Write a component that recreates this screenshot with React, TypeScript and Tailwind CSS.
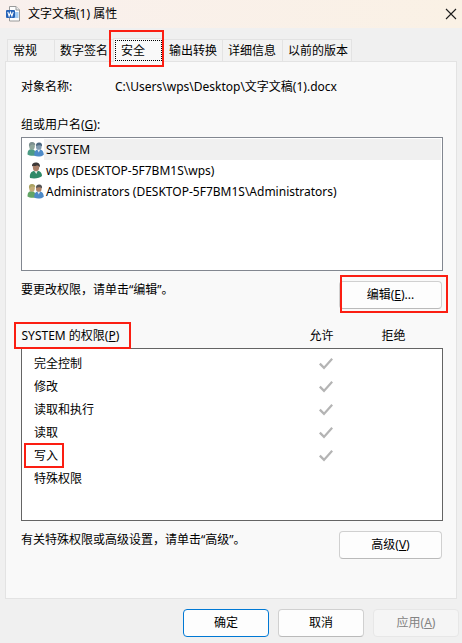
import type { ReactNode } from 'react';
import clsx from 'clsx';

const TABS = [
  { label: '常规', width: 'w-[47px]' },
  { label: '数字签名', width: 'w-[59px]' },
  { label: '安全', width: 'w-[50px]', active: true },
  { label: '输出转换', width: 'w-[59px]' },
  { label: '详细信息', width: 'w-[60px]' },
  { label: '以前的版本', width: 'w-[70px]' },
];

const PRINCIPALS = [
  { name: 'SYSTEM', kind: 'system', selected: true },
  { name: 'wps (DESKTOP-5F7BM1S\\wps)', kind: 'user' },
  { name: 'Administrators (DESKTOP-5F7BM1S\\Administrators)', kind: 'group' },
];

const PERMISSIONS = [
  { label: '完全控制', allow: true },
  { label: '修改', allow: true },
  { label: '读取和执行', allow: true },
  { label: '读取', allow: true },
  { label: '写入', allow: true, marked: true },
  { label: '特殊权限', allow: false },
];

function WordIcon() {
  return (
    <svg width="16" height="18" viewBox="0 0 16 18" aria-hidden="true">
      <path d="M3.5 1.5h6.5l3.5 3.5v11h-10z" fill="#fdfdfd" stroke="#9a9a9a" />
      <path d="M10 1.5V5h3.5" fill="#eee" stroke="#9a9a9a" />
      <path d="M9 8h3.5M9 10h3.5M9 12h3.5" stroke="#4c9be8" strokeWidth="1.2" />
      <rect x="0" y="5" width="9" height="8" rx="1" fill="#2563b8" />
      <path d="M1.8 6.8l1.3 4.3 1.4-3.8 1.4 3.8 1.3-4.3" fill="none" stroke="#fff" strokeWidth="1.1" />
    </svg>
  );
}

function PrincipalIcon({ kind }: { kind: string }) {
  if (kind === 'user') {
    return (
      <svg width="17" height="17" viewBox="0 0 17 17" aria-hidden="true">
        <path d="M3 16c-.6-4 1-6.5 4-7.3l2 1.3 2-1.3c3 .5 4 3 4 5.3-2 2.4-8 3-12 2z" fill="#2f8a68" />
        <path d="M7 8.5h3.8L9.3 12z" fill="#e6eee9" />
        <ellipse cx="9" cy="5.5" rx="3.1" ry="3.8" fill="#a97f68" />
        <path d="M5 4.5C4.6 1.8 6.5.5 9 .6c3 0 4.6 2.2 3.8 4.8-.6-1.4-1.6-2-3-2-1.3.5-2.8.8-3.4.4z" fill="#3c3836" />
      </svg>
    );
  }

  const system = kind === 'system';
  return (
    <svg width="17" height="17" viewBox="0 0 17 17" aria-hidden="true">
      <path d="M.5 13.5c0-4 1.3-5.4 4-5.6 3 .3 4.3 2.3 4 6.6-2.4.6-6.5.4-8-1z" fill={system ? '#4b9b84' : '#62a566'} />
      <path d="M7.4 14.8c-.4-4 .8-6 4-6.5 3.3 0 5.2 1.6 5.4 5.4-1.8 2-6.8 2.4-9.4 1.1z" fill="#4d8ac8" />
      <ellipse cx="5" cy="5.2" rx="2.8" ry="3.6" fill={system ? '#8fa69b' : '#c4ad79'} />
      <path d="M2 5.4C1.5 2.3 2.8 1 5 1s3.6 1.2 3.2 3.6C6.8 3.4 5.4 3.2 4.4 3.8z" fill={system ? '#7d9090' : '#aaa363'} />
      <ellipse cx="11.8" cy="5.8" rx="2.8" ry="3.3" fill={system ? '#829bb0' : '#ae8268'} />
      <path d="M9 5c-.2-2.6 1.4-3.6 3.2-3.5 2.4 0 3.3 1.8 2.7 4-1-1.3-3.4-1.8-5.9-.5z" fill={system ? '#4d6880' : '#545354'} />
      <path d="M10.3 8.8h2.8l-1.3 2.6z" fill="#e1eaf1" />
    </svg>
  );
}

// Red callout frame laid over the content it points at.
function Callout({ className }: { className: string }) {
  return <span aria-hidden="true" className={clsx('pointer-events-none absolute z-10 border-2 border-[#fb1e12]', className)} />;
}

function DialogButton({
  children,
  variant = 'normal',
  className,
}: {
  children: ReactNode;
  variant?: 'normal' | 'primary' | 'disabled';
  className: string;
}) {
  return (
    <button
      type="button"
      disabled={variant === 'disabled'}
      className={clsx(
        'flex h-7 shrink-0 items-center justify-center rounded-[4px] border',
        variant === 'primary' && 'border-[#0078d4] bg-[#fdfdfd]',
        variant === 'normal' && 'border-[#d0d0d0] border-b-[#bababa] bg-[#fdfdfd]',
        variant === 'disabled' && 'border-[#e7e7e7] bg-[#f5f5f5] text-[#838383]',
        className,
      )}
    >
      <span>{children}</span>
    </button>
  );
}

function PermissionCheck({ label, checked }: { label: string; checked: boolean }) {
  return (
    <span className="relative ml-2 inline-flex h-[14px] w-[14px] align-middle">
      <input type="checkbox" aria-label={label} checked={checked} disabled readOnly className="h-full w-full appearance-none" />
      {checked && (
        <svg width="14" height="14" viewBox="0 0 14 14" className="absolute inset-0" aria-hidden="true">
          <path d="M.8 6.6l4.2 4.3 8.2-9.2" fill="none" stroke="#b4b4b4" strokeWidth="2.3" />
        </svg>
      )}
    </span>
  );
}

function PermissionTable() {
  return (
    <table className="mt-[13px] w-full table-fixed border-collapse text-left">
      <colgroup>
        <col />
        <col className="w-[72px]" />
        <col className="w-[84px]" />
      </colgroup>
      <thead>
        <tr className="h-6">
          <th className="p-0 font-normal">
            <span className="relative">
              SYSTEM 的权限(<u>P</u>)
              <Callout className="-left-2 -right-3 -inset-y-[5px]" />
            </span>
          </th>
          <th className="p-0 pl-[23px] font-normal">允许</th>
          <th className="p-0 pl-[23px] font-normal">拒绝</th>
        </tr>
      </thead>
      <tbody className="border border-[#646464] bg-white">
        <tr className="h-1">
          <td colSpan={3} className="p-0" />
        </tr>
        {PERMISSIONS.map((p) => (
          <tr key={p.label} className="h-[23px]">
            <td className="p-0 pl-3">
              <span className="relative">
                {p.label}
                {p.marked && <Callout className="-left-[10px] -right-[6px] -inset-y-1" />}
              </span>
            </td>
            <td className="p-0 pl-6">
              <PermissionCheck label={`允许 ${p.label}`} checked={p.allow} />
            </td>
            <td className="p-0 pl-6">
              <PermissionCheck label={`拒绝 ${p.label}`} checked={false} />
            </td>
          </tr>
        ))}
        <tr className="h-[30px]">
          <td colSpan={3} className="p-0" />
        </tr>
      </tbody>
    </table>
  );
}

export default function App() {
  return (
    <div className="min-h-screen bg-[#f0f0f0] font-['Noto_Sans','Noto_Sans_CJK_SC',sans-serif] text-[12px] leading-[18px] text-black">
      <header className="flex h-7 items-center bg-linear-to-r from-[#f9f0ed] to-[#faf1e5] pl-[6px] pr-[5px]">
        <WordIcon />
        <h1 className="ml-[6px] flex-1">文字文稿(1) 属性</h1>
        <button type="button" aria-label="关闭">
          <svg width="12" height="12" viewBox="0 0 12 12" aria-hidden="true">
            <path d="M1 1l10 10M11 1L1 11" stroke="#1c1c1c" strokeWidth="1.1" />
          </svg>
        </button>
      </header>

      <main className="px-[5px] pt-[10px]">
        <div role="tablist" className="flex items-end pl-[2px]">
          {TABS.map((tab) => (
            <button
              key={tab.label}
              type="button"
              role="tab"
              aria-selected={!!tab.active}
              className={clsx(
                'relative shrink-0 whitespace-nowrap border-l border-t border-[#e3e3e3] text-left last:border-r',
                tab.width,
                tab.active ? '-mb-px h-6 bg-[#f9f9f9] pl-[7px]' : 'h-[22px] bg-[#f2f2f2] pl-[5px]',
              )}
            >
              {tab.label}
              {tab.active && (
                <>
                  <span className="absolute inset-x-px bottom-px top-px border border-dotted border-black" />
                  <Callout className="-bottom-[5px] -left-[5px] -right-px -top-[9px]" />
                </>
              )}
            </button>
          ))}
        </div>

        <section className="border border-[#e3e3e3] bg-[#f9f9f9] pb-[39px] pl-[15px] pr-[13px] pt-4">
          <div className="flex">
            <span className="w-[94px]">对象名称:</span>
            <span>C:\Users\wps\Desktop\文字文稿(1).docx</span>
          </div>

          <h2 className="mt-5">
            组或用户名(<u>G</u>):
          </h2>
          <ul className="mt-[3px] h-[134px] border border-[#828790] bg-white p-px">
            {PRINCIPALS.map((p) => (
              <li key={p.name} className="flex h-[21px] items-center pl-1">
                <PrincipalIcon kind={p.kind} />
                <span className={clsx('flex h-full flex-1 items-center whitespace-nowrap pl-[2px]', p.selected && 'bg-[#f0f0f0]')}>
                  {p.name}
                </span>
              </li>
            ))}
          </ul>

          <div className="mt-[10px] flex h-[30px] items-start justify-between">
            <p>要更改权限，请单击“编辑”。</p>
            <div className="relative mr-px">
              <DialogButton className="w-[103px]">
                编辑(<u>E</u>)...
              </DialogButton>
              <Callout className="-bottom-1 -right-[6px] -top-[6px] left-px" />
            </div>
          </div>

          <PermissionTable />

          <div className="mt-[10px] flex items-start justify-between">
            <p>有关特殊权限或高级设置，请单击“高级”。</p>
            <DialogButton className="mr-px w-[103px]">
              高级(<u>V</u>)
            </DialogButton>
          </div>
        </section>
      </main>

      <footer className="flex justify-end gap-[9px] px-[3px] pb-[6px] pt-[10px]">
        <DialogButton variant="primary" className="w-[86px]">
          确定
        </DialogButton>
        <DialogButton className="w-[86px]">取消</DialogButton>
        <DialogButton variant="disabled" className="w-[86px]">
          应用(<u>A</u>)
        </DialogButton>
      </footer>
    </div>
  );
}
